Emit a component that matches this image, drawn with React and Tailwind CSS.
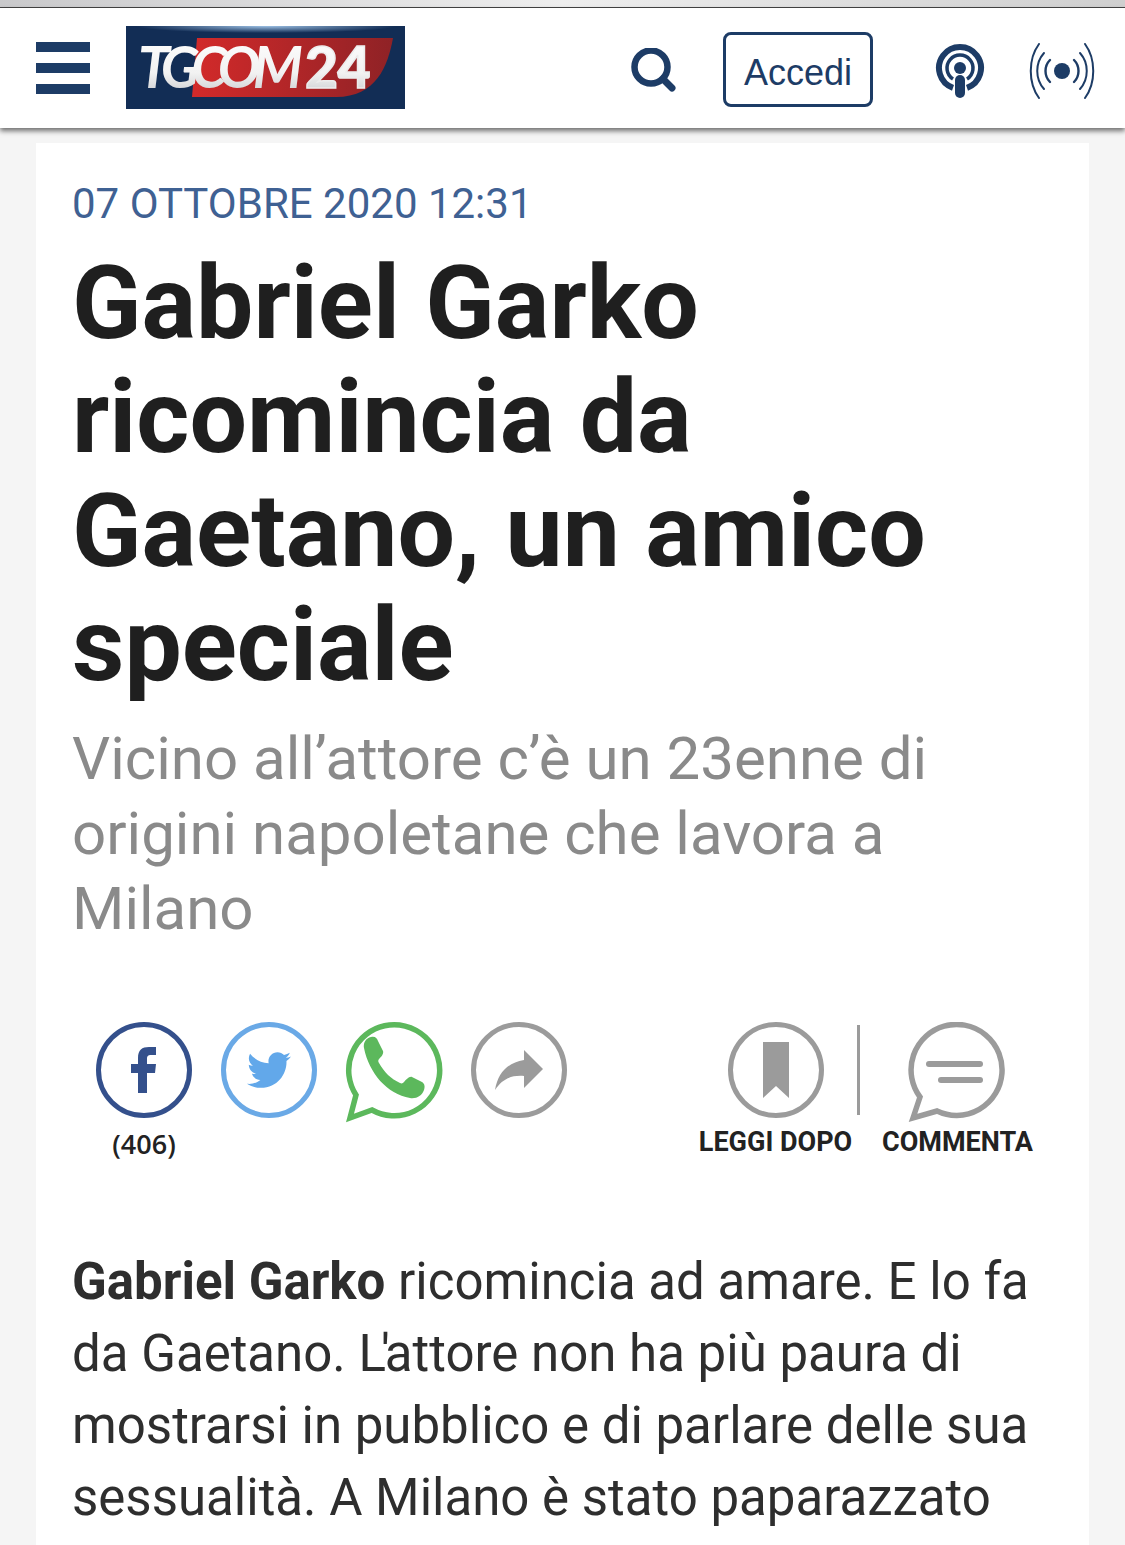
import React from 'react';
import { FaTwitter } from 'react-icons/fa';

// ── Icons ──────────────────────────────────────────────
const Logo = () => (
  <svg width="279" height="83" viewBox="0 0 279 83" className="block flex-none">
    <defs>
      <radialGradient id="glow" cx="0.5" cy="0" r="0.5">
        <stop offset="0" stopColor="#9cc0e4" />
        <stop offset="1" stopColor="#122d55" />
      </radialGradient>
      <linearGradient id="red" x1="0" x2="1" y1="0" y2="0">
        <stop offset="0" stopColor="#d32a2a" />
        <stop offset="1" stopColor="#8f2226" />
      </linearGradient>
      <linearGradient id="white" x1="0" x2="0" y1="0" y2="1">
        <stop offset="0" stopColor="#ffffff" />
        <stop offset="0.6" stopColor="#f2f2f2" />
        <stop offset="1" stopColor="#c4c6ca" />
      </linearGradient>
    </defs>
    <rect width="279" height="83" fill="#122d55" />
    <rect x="10" width="260" height="14" fill="url(#glow)" />
    <path d="M71 12H267C262 40 250 71 210 71H66Z" fill="url(#red)" />
    <text x="12" y="62" fontFamily="Lato, sans-serif" fontStyle="italic" fontWeight="700" fontSize="57" letterSpacing="-8" fill="url(#white)">TGCOM</text>
    <text x="179" y="62" fontFamily="Lato, sans-serif" fontWeight="900" fontSize="57" letterSpacing="-0.5" fill="url(#white)" stroke="#ececec" strokeWidth="1.5">24</text>
  </svg>
);

const IconSearch = () => (
  <svg width="46" height="46" viewBox="0 0 46 46" fill="none" stroke="#1d3c66" strokeLinecap="round">
    <circle cx="20" cy="19" r="16.5" strokeWidth="6.5" />
    <line x1="32" y1="31" x2="41" y2="40" strokeWidth="7" />
  </svg>
);

const IconPodcast = () => (
  <svg width="50" height="54" viewBox="0 0 50 54" fill="none" stroke="#1d3c66">
    <path d="M18 43.8A21 21 0 1 1 32 43.8" strokeWidth="6" />
    <path d="M18 35A13 13 0 1 1 32 35" strokeWidth="3.5" />
    <circle cx="25" cy="24" r="6" fill="#1d3c66" stroke="none" />
    <line x1="25" y1="36" x2="25" y2="49" strokeWidth="10" strokeLinecap="round" />
  </svg>
);

const IconLive = () => (
  <svg width="66" height="56" viewBox="0 0 66 56" fill="none" stroke="#1d3c66" strokeWidth="2" strokeLinecap="round">
    <circle cx="33" cy="28" r="8" fill="#1d3c66" stroke="none" />
    <path d="M21 17C15 23 15 33 21 39" strokeWidth="2.4" />
    <path d="M45 17C51 23 51 33 45 39" strokeWidth="2.4" />
    <path d="M15 10C6 20 6 36 15 46" />
    <path d="M51 10C60 20 60 36 51 46" />
    <path d="M10 1C-1 16 -1 40 10 55" />
    <path d="M56 1C67 16 67 40 56 55" />
  </svg>
);

const Ring = ({ className, children }) => (
  <div className={`flex h-24 w-24 flex-none items-center justify-center rounded-full border-[5.5px] ${className}`}>
    {children}
  </div>
);

const IconFacebook = () => (
  <svg width="26" height="46" viewBox="0 0 26 46" fill="#34508c">
    <path d="M7 46V26H0V17H7V11C7 3 11 0 18 0H25V8H20C17 8 16 9 16 12V17H25L24 26H16V46Z" />
  </svg>
);

const IconWhatsapp = () => (
  <svg width="104" height="102" viewBox="0 0 104 102" fill="none" className="block">
    <path d="M8 96L14 73A45.5 45.5 0 1 1 30 88Z" stroke="#5cb85c" strokeWidth="5.5" strokeLinejoin="miter" />
    <path d="M22 26C21 21 24 16 29 15C33 14 35 16 36 19L41 29C42 32 39 35 37 37C36 38 36 40 37 41C42 50 49 57 58 61C60 62 61 61 62 60C64 58 67 54 70 55L80 60C83 62 83 65 82 68C80 74 74 77 68 76C45 72 27 51 22 26Z" fill="#5cb85c" />
  </svg>
);

const IconShare = () => (
  <svg width="48" height="40" viewBox="0 0 48 40" fill="#9b9b9b">
    <path d="M29 0L48 19L29 38V26C16 25 7 29 0 40C3 23 12 13 29 10Z" />
  </svg>
);

const IconBookmark = () => (
  <svg width="26" height="56" viewBox="0 0 26 56" fill="#9b9b9b">
    <path d="M0 0H26V56L13 44L0 56Z" />
  </svg>
);

const IconComment = () => (
  <svg width="104" height="102" viewBox="0 0 104 102" fill="none" className="block">
    <path d="M9 96L16 75A45.5 45.5 0 1 1 33 89Z" stroke="#9b9b9b" strokeWidth="5.5" />
    <line x1="25" y1="42" x2="76" y2="42" stroke="#9b9b9b" strokeWidth="6" strokeLinecap="round" />
    <line x1="37" y1="58" x2="76" y2="58" stroke="#9b9b9b" strokeWidth="6" strokeLinecap="round" />
  </svg>
);

// ── Header ─────────────────────────────────────────────
const Header = () => (
  <header className="relative z-10 flex h-[120px] flex-none items-center bg-white pl-[36px] shadow-[0_3px_5px_rgba(0,0,0,0.55)]">
    <div className="flex w-[54px] flex-none flex-col gap-[11px]">
      <div className="h-[10px] bg-[#1d3c66]" />
      <div className="h-[10px] bg-[#1d3c66]" />
      <div className="h-[10px] bg-[#1d3c66]" />
    </div>
    <div className="mb-[1px] ml-[36px]"><Logo /></div>
    <div className="mt-[5px] ml-[226px]"><IconSearch /></div>
    <button className="mt-[3px] ml-[46px] flex h-[75px] w-[150px] flex-none items-center justify-center rounded-[8px] border-[3px] border-[#1d3c66] pt-[6px] font-['Liberation_Sans',sans-serif] text-[36px] text-[#1d3c66]">
      Accedi
    </button>
    <div className="mt-[6px] ml-[62px]"><IconPodcast /></div>
    <div className="mt-[5px] ml-[44px]"><IconLive /></div>
  </header>
);

// ── Share row ──────────────────────────────────────────
const ShareRow = () => (
  <div className="mt-[76px] flex items-start font-['Roboto',sans-serif]">
    <div className="ml-[24px] flex w-24 flex-none flex-col items-center">
      <Ring className="border-[#34508c]"><IconFacebook /></Ring>
      <span className="mt-[9px] font-['Open_Sans',sans-serif] text-[27px] leading-[34px] font-semibold text-[#222]">(406)</span>
    </div>
    <div className="ml-[29px]">
      <Ring className="border-[#6aa9e6]"><FaTwitter className="text-[44px] text-[#62a8ea]" /></Ring>
    </div>
    <div className="ml-[25px] h-24 w-24 flex-none"><IconWhatsapp /></div>
    <div className="ml-[33px]">
      <Ring className="border-[#9b9b9b]"><IconShare /></Ring>
    </div>
    <div className="ml-[132px] flex w-[153px] flex-none flex-col items-center">
      <Ring className="border-[#9b9b9b]"><IconBookmark /></Ring>
      <span className="mt-[8px] text-[27px] leading-[32px] font-bold whitespace-nowrap text-[#222]">LEGGI DOPO</span>
    </div>
    <div className="mt-[3px] ml-[5px] h-[90px] w-[3px] flex-none bg-[#9b9b9b]" />
    <div className="ml-[22px] flex w-[151px] flex-none flex-col items-center">
      <div className="mr-[12px] h-24 w-24 flex-none"><IconComment /></div>
      <span className="mt-[8px] text-[27px] leading-[32px] font-bold whitespace-nowrap text-[#222]">COMMENTA</span>
    </div>
  </div>
);

export default function App() {
  return (
    <div className="flex h-[1545px] flex-col overflow-hidden bg-[#f5f5f5]">
      <div className="h-[8px] flex-none border-b border-[#444] bg-gradient-to-r from-[#c9c9cb] via-[#eeeeee] to-[#cfcfcf]" />
      <Header />
      <main className="mx-[36px] mt-[15px] flex-1 bg-white pt-[37px] pl-[36px] font-['Roboto',sans-serif]">
        <div className="text-[42px] leading-[48px] text-[#3f6193]">07 OTTOBRE 2020 12:31</div>
        <h1 className="mt-[18px] text-[102px] leading-[114px] font-bold text-[#1f1f1f]">
          Gabriel Garko<br />ricomincia da<br />Gaetano, un amico<br />speciale
        </h1>
        <h2 className="mt-[19px] text-[60px] leading-[75px] text-[#8a8a8a]">
          Vicino all’attore c’è un 23enne di<br />origini napoletane che lavora a<br />Milano
        </h2>
        <ShareRow />
        <p className="mt-[85px] text-[51px] leading-[72px] text-[#2e2e2e]">
          <strong className="font-bold">Gabriel Garko</strong> ricomincia ad amare. E lo fa<br />
          da Gaetano. <span className="tracking-[-5px]">L'</span>attore non ha più paura di<br />
          mostrarsi in pubblico e di parlare delle sua<br />
          sessualità. A Milano è stato paparazzato
        </p>
      </main>
    </div>
  );
}
